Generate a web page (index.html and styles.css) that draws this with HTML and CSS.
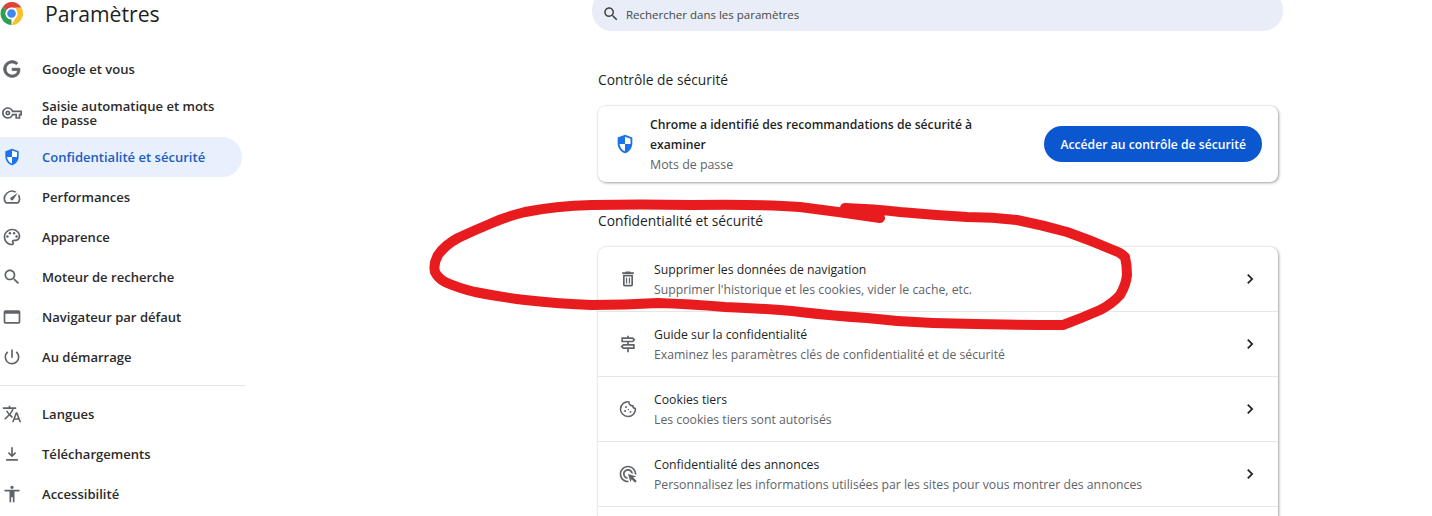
FILE: index.html
```html
<!DOCTYPE html>
<html lang="fr">

<head>
    <meta charset="UTF-8">
    <meta name="viewport" content="width=device-width, initial-scale=1.0">
    <title>Paramètres</title>
    <link rel="stylesheet" href="styles.css">
</head>

<body>
    <div class="page">

        <!-- left menu -->
        <aside class="sidebar">
            <header class="brand">
                <svg class="logo" viewBox="0 0 48 48">
                    <path fill="#db4437" d="M24 0a24 24 0 0 1 20.800 12H24a12 12 0 0 0-11.400 8.200L6.600 8.900A24 24 0 0 1 24 0z" />
                    <path fill="#fbc02d" d="M44.800 12A24 24 0 0 1 24 48l10.400-18A12 12 0 0 0 34.400 18l-2-6z" />
                    <path fill="#2e9e4f" d="M6.600 8.900l6 10.400a12 12 0 0 0 1 10.700 12 12 0 0 0 10.400 6L24 48A24 24 0 0 1 6.600 8.900z" />
                    <circle cx="24" cy="24" r="12.500" fill="#fff" />
                    <circle cx="24" cy="24" r="9" fill="#4285f4" />
                </svg>
                <h1 class="brand-title">Paramètres</h1>
            </header>

            <nav class="menu">
                <a class="menu-item">
                    <svg class="icon icon-bold" viewBox="0 0 24 24"><path d="M21.35 11.1h-9.17v2.73h6.51c-.33 3.81-3.5 5.44-6.5 5.44C8.36 19.27 5 16.25 5 12c0-4.1 3.2-7.27 7.2-7.27 3.09 0 4.9 1.97 4.9 1.97L19 4.72S16.56 2 12.1 2C6.42 2 2 6.8 2 12c0 5.05 4.13 10 10.22 10 5.35 0 9.25-3.67 9.25-9.09 0-1.15-.12-1.81-.12-1.81z" /></svg>
                    <span>Google et vous</span>
                </a>
                <a class="menu-item menu-item-tall">
                    <svg class="icon" viewBox="0 0 24 24"><path d="M22 19h-6v-4h-2.68c-1.14 2.42-3.6 4-6.32 4-3.86 0-7-3.14-7-7s3.14-7 7-7c2.72 0 5.17 1.58 6.32 4H24v6h-2v4zm-4-2h2v-4h2v-2H11.94l-.23-.67C11.01 8.34 9.11 7 7 7c-2.76 0-5 2.24-5 5s2.24 5 5 5c2.11 0 4.01-1.34 4.71-3.33l.23-.67H18v4zM7 15c-1.65 0-3-1.35-3-3s1.35-3 3-3 3 1.35 3 3-1.35 3-3 3zm0-4c-.55 0-1 .45-1 1s.45 1 1 1 1-.45 1-1-.45-1-1-1z" /></svg>
                    <span>Saisie automatique et mots de passe</span>
                </a>
                <a class="menu-item active">
                    <svg class="icon" viewBox="0 0 24 24"><path fill="#1a73e8" d="M12 2 4 5v6.090c0 5.050 3.410 9.760 8 10.910 4.590-1.150 8-5.860 8-10.910V5l-8-3z" /><path fill="#fff" d="M12 4.200 18 6.400V12h-6zM12 12v7.900c-3.200-1-5.500-4.200-5.900-7.900z" /></svg>
                    <span>Confidentialité et sécurité</span>
                </a>
                <a class="menu-item">
                    <svg class="icon" viewBox="0 0 24 24"><path d="M20.38 8.57l-1.23 1.85a8 8 0 0 1-.22 7.58H5.07A8 8 0 0 1 15.58 6.85l1.85-1.23A10 10 0 0 0 3.35 19a2 2 0 0 0 1.72 1h13.85a2 2 0 0 0 1.74-1 10 10 0 0 0-.27-10.44zm-9.79 6.84a2 2 0 0 0 2.83 0l5.66-8.49-8.49 5.66a2 2 0 0 0 0 2.83z" /></svg>
                    <span>Performances</span>
                </a>
                <a class="menu-item">
                    <svg class="icon" viewBox="0 0 24 24"><path d="M12 22C6.49 22 2 17.51 2 12S6.49 2 12 2s10 4.04 10 9c0 3.31-2.69 6-6 6h-1.77c-.28 0-.5.22-.5.5 0 .12.05.23.13.33.41.47.64 1.06.64 1.67 0 1.38-1.12 2.5-2.5 2.5zm0-18c-4.41 0-8 3.59-8 8s3.59 8 8 8c.28 0 .5-.22.5-.5 0-.16-.08-.28-.14-.35-.41-.46-.63-1.05-.63-1.65 0-1.38 1.12-2.5 2.5-2.5H16c2.21 0 4-1.79 4-4 0-3.86-3.59-7-8-7z" /><circle cx="6.500" cy="11.500" r="1.500" /><circle cx="9.500" cy="7.500" r="1.500" /><circle cx="14.500" cy="7.500" r="1.500" /><circle cx="17.500" cy="11.500" r="1.500" /></svg>
                    <span>Apparence</span>
                </a>
                <a class="menu-item">
                    <svg class="icon" viewBox="0 0 24 24"><path d="M15.5 14h-.79l-.28-.27C15.41 12.59 16 11.11 16 9.5 16 5.91 13.09 3 9.5 3S3 5.91 3 9.5 5.91 16 9.5 16c1.61 0 3.09-.59 4.23-1.57l.27.28v.79l5 4.99L20.49 19l-4.99-5zm-6 0C7.01 14 5 11.99 5 9.5S7.01 5 9.5 5 14 7.01 14 9.5 11.99 14 9.5 14z" /></svg>
                    <span>Moteur de recherche</span>
                </a>
                <a class="menu-item">
                    <svg class="icon" viewBox="0 0 24 24"><path d="M20 4H4c-1.11 0-2 .9-2 2v12c0 1.1.89 2 2 2h16c1.1 0 2-.9 2-2V6c0-1.1-.89-2-2-2zm0 14H4V8h16v10z" /></svg>
                    <span>Navigateur par défaut</span>
                </a>
                <a class="menu-item">
                    <svg class="icon" viewBox="0 0 24 24"><path d="M13 3h-2v10h2V3zm4.83 2.17-1.42 1.42A6.92 6.92 0 0 1 19 12c0 3.87-3.13 7-7 7A6.995 6.995 0 0 1 7.58 6.58L6.17 5.17A8.932 8.932 0 0 0 3 12a9 9 0 0 0 18 0c0-2.74-1.23-5.18-3.17-6.83z" /></svg>
                    <span>Au démarrage</span>
                </a>
                <div class="menu-divider"></div>
                <a class="menu-item">
                    <svg class="icon" viewBox="0 0 24 24"><path d="M12.87 15.07l-2.54-2.51.03-.03c1.74-1.94 2.98-4.17 3.71-6.53H17V4h-7V2H8v2H1v1.99h11.17C11.5 7.92 10.44 9.75 9 11.35 8.07 10.32 7.3 9.19 6.69 8h-2c.73 1.63 1.73 3.17 2.98 4.56l-5.09 5.02L4 19l5-5 3.11 3.11.76-2.04zM18.5 10h-2L12 22h2l1.12-3h4.75L21 22h2l-4.5-12zm-2.62 7l1.62-4.33L19.12 17h-3.24z" /></svg>
                    <span>Langues</span>
                </a>
                <a class="menu-item">
                    <svg class="icon" viewBox="0 0 24 24"><path d="M12 16l-5-5 1.41-1.41L11 12.17V4h2v8.17l2.59-2.58L17 11l-5 5zM5 20v-2h14v2H5z" /></svg>
                    <span>Téléchargements</span>
                </a>
                <a class="menu-item">
                    <svg class="icon" viewBox="0 0 24 24"><path d="M12 2c1.1 0 2 .9 2 2s-.9 2-2 2-2-.9-2-2 .9-2 2-2zm9 7h-6v13h-2v-6h-2v6H9V9H3V7h18v2z" /></svg>
                    <span>Accessibilité</span>
                </a>
            </nav>
        </aside>

        <!-- main column -->
        <main class="content">
            <div class="search">
                <svg class="search-icon" viewBox="0 0 24 24"><path d="M15.5 14h-.79l-.28-.27C15.41 12.59 16 11.11 16 9.5 16 5.91 13.09 3 9.5 3S3 5.91 3 9.5 5.91 16 9.5 16c1.61 0 3.09-.59 4.23-1.57l.27.28v.79l5 4.99L20.49 19l-4.99-5zm-6 0C7.01 14 5 11.99 5 9.5S7.01 5 9.5 5 14 7.01 14 9.5 11.99 14 9.5 14z" /></svg>
                <span>Rechercher dans les paramètres</span>
            </div>

            <section class="section">
                <h2 class="section-title">Contrôle de sécurité</h2>
                <div class="card check-card">
                    <svg class="check-icon" viewBox="0 0 24 24"><path fill="#1a73e8" d="M12 2 4 5v6.090c0 5.050 3.410 9.760 8 10.910 4.590-1.150 8-5.860 8-10.910V5l-8-3z" /><path fill="#fff" d="M12 4.200 18 6.400V12h-6zM12 12v7.900c-3.200-1-5.500-4.200-5.900-7.900z" /></svg>
                    <div class="check-text">
                        <div class="check-title">Chrome a identifié des recommandations de sécurité à examiner</div>
                        <div class="row-sub">Mots de passe</div>
                    </div>
                    <button class="check-btn">Accéder au contrôle de sécurité</button>
                </div>
            </section>

            <section class="section section-privacy">
                <h2 class="section-title">Confidentialité et sécurité</h2>
                <div class="card">
                    <div class="row">
                        <svg class="row-icon" viewBox="0 0 24 24"><path d="M6 19c0 1.1.9 2 2 2h8c1.1 0 2-.9 2-2V7H6v12zM8 9h8v10H8V9zm7.5-5l-1-1h-5l-1 1H5v2h14V4h-3.5zM9.500 10.500h1.500v7H9.500zm3.500 0h1.500v7H13z" /></svg>
                        <div class="row-text">
                            <div class="row-title">Supprimer les données de navigation</div>
                            <div class="row-sub">Supprimer l'historique et les cookies, vider le cache, etc.</div>
                        </div>
                        <svg class="chevron" viewBox="0 0 24 24"><path d="M8.59 16.59 13.17 12 8.59 7.41 10 6l6 6-6 6z" /></svg>
                    </div>
                    <div class="row">
                        <svg class="row-icon" viewBox="0 0 24 24"><path d="M13 10h5l3-3-3-3h-5V2h-2v2H4v6h7v2H6l-3 3 3 3h5v4h2v-4h7v-6h-7v-2zM6 6h11.170l1 1-1 1H6V6zm12 10H6.830l-1-1 1-1H18v2z" /></svg>
                        <div class="row-text">
                            <div class="row-title">Guide sur la confidentialité</div>
                            <div class="row-sub">Examinez les paramètres clés de confidentialité et de sécurité</div>
                        </div>
                        <svg class="chevron" viewBox="0 0 24 24"><path d="M8.59 16.59 13.17 12 8.59 7.41 10 6l6 6-6 6z" /></svg>
                    </div>
                    <div class="row">
                        <svg class="row-icon" viewBox="0 0 24 24"><path fill="none" stroke="#5f6368" stroke-width="1.800" d="M20.900 11.500c-1.800-.2-3.200-1.500-3.100-3.300-2.500.2-4.600-1.700-4.700-4.700C7.800 2.700 3 6.800 3 12c0 5 4 9 9 9 5.300 0 9.300-4.300 8.900-9.500z" /><circle cx="9.500" cy="9.500" r="1.200" /><circle cx="8.500" cy="14.500" r="1.200" /><circle cx="15" cy="15.500" r="1.100" /><circle cx="12.500" cy="12.500" r=".8" /></svg>
                        <div class="row-text">
                            <div class="row-title">Cookies tiers</div>
                            <div class="row-sub">Les cookies tiers sont autorisés</div>
                        </div>
                        <svg class="chevron" viewBox="0 0 24 24"><path d="M8.59 16.59 13.17 12 8.59 7.41 10 6l6 6-6 6z" /></svg>
                    </div>
                    <div class="row">
                        <svg class="row-icon" viewBox="0 0 24 24"><path d="M11.710 17.990A5.993 5.993 0 0 1 6 12c0-3.310 2.690-6 6-6 3.220 0 5.840 2.530 5.990 5.710l-2.100-.63A3.999 3.999 0 0 0 12 8c-2.210 0-4 1.790-4 4 0 1.900 1.330 3.490 3.110 3.890l.6 2.100zM22 12c0 .3-.01.6-.04.9l-1.970-.59c.01-.1.01-.21.01-.31 0-4.420-3.580-8-8-8s-8 3.580-8 8 3.580 8 8 8c.1 0 .21 0 .31-.01l.59 1.970c-.3.03-.6.04-.9.04-5.520 0-10-4.480-10-10S6.480 2 12 2s10 4.480 10 10zm-3.770 4.260L22 15l-10-3 3 10 1.260-3.770 4.270 4.270 1.980-1.980-4.280-4.260z" /></svg>
                        <div class="row-text">
                            <div class="row-title">Confidentialité des annonces</div>
                            <div class="row-sub">Personnalisez les informations utilisées par les sites pour vous montrer des annonces</div>
                        </div>
                        <svg class="chevron" viewBox="0 0 24 24"><path d="M8.59 16.59 13.17 12 8.59 7.41 10 6l6 6-6 6z" /></svg>
                    </div>
                    <div class="row"></div>
                </div>
            </section>
        </main>
    </div>

    <!-- red marker drawn over the screenshot -->
    <svg class="marker" viewBox="0 0 1432 516">
        <path d="M880 218 Q840 212 800 207 Q760 204 692 205 Q640 204 592 205 Q555 206 525 212 Q505 217 492 223 Q475 230 458 238 Q445 245 438 255 Q433 264 435 272 Q438 278 445 282 Q458 288 475 292 Q500 297 525 300 Q560 304 592 305 Q625 305 658 303 Q690 304 725 307 Q775 309 800 312 Q835 316 867 318 Q900 322 933 323 Q1000 325 1063 325 Q1082 318 1100 310 Q1112 304 1120 295 Q1126 285 1127 275 Q1127 265 1125 257 Q1120 252 1113 250 Q1090 240 1067 232 Q1042 225 1017 220 Q992 217 967 217 Q933 215 900 212 Q875 209 845 208" />
    </svg>
</body>

</html>
```

FILE: styles.css
```css
* {
    box-sizing: border-box;
}

html,
body {
    margin: 0;
    padding: 0;
    height: 516px;
    overflow: hidden;
    background-color: #fff;
}

body {
    font-family: 'Open Sans', 'Noto Sans', sans-serif;
    color: #1f1f1f;
}

.page {
    display: grid;
    grid-template-columns: 245px 1fr;
    height: 516px;
    overflow: hidden;
}

/* left menu */
.brand {
    display: flex;
    align-items: center;
    gap: 22px;
    height: 49px;
    padding-bottom: 22px;
}

.logo {
    width: 23px;
    height: 23px;
    flex: none;
}

.brand-title {
    margin: 0;
    font-size: 21.200px;
    font-weight: 500;
    color: #1f1f1f;
}

.menu-item {
    display: flex;
    align-items: center;
    gap: 20px;
    height: 40px;
    padding-left: 2px;
    padding-right: 20px;
    width: 242px;
    font-size: 13.050px;
    font-weight: 600;
    line-height: 14px;
    color: #2b2b2b;
    border-radius: 0 20px 20px 0;
}

.menu-item-tall {
    height: 48px;
}

.menu-item.active {
    background-color: #e8f0fe;
    color: #1a5fbf;
}

.icon {
    width: 20px;
    height: 20px;
    flex: none;
    fill: #5f6368;
}

.icon-bold {
    stroke: #5f6368;
    stroke-width: 1;
}

.menu-divider {
    height: 1px;
    margin: 8px 0;
    background-color: #e6e6e6;
}

/* main column */
.content {
    padding-left: 347px;
    width: 1038px;
}

.search {
    display: flex;
    align-items: center;
    gap: 6px;
    width: 691px;
    height: 41px;
    margin-top: -10px;
    padding: 7px 0 0 10px;
    border-radius: 20px;
    background-color: #e9edf7;
    font-size: 11.500px;
    color: #444746;
}

.search-icon {
    width: 18px;
    height: 18px;
    flex: none;
    fill: #444746;
}

.section {
    margin-left: 6px;
    width: 680px;
}

.section-title {
    margin: 0;
    height: 36px;
    padding-top: 39px;
    box-sizing: content-box;
    font-size: 13.800px;
    line-height: 20px;
    font-weight: 400;
    color: #1f1f1f;
}

.section-privacy .section-title {
    padding-top: 29px;
}

.card {
    background-color: #fff;
    border-radius: 8px;
    box-shadow: 1px 1px 3px rgba(0, 0, 0, 0.35), 0 0 2px rgba(60, 64, 67, 0.15);
}

.check-card {
    display: flex;
    align-items: center;
    height: 76px;
    padding: 0 16px;
}

.check-icon {
    width: 22px;
    height: 22px;
    flex: none;
}

.check-text {
    flex: 1;
    margin-left: 14px;
    padding: 2px 60px 0 0;
    font-size: 12.400px;
    line-height: 20px;
}

.check-title {
    font-weight: 600;
    font-size: 12.200px;
}

.check-btn {
    flex: none;
    height: 36px;
    padding: 0 16px;
    border: none;
    border-radius: 18px;
    background-color: #0b57d0;
    color: #fff;
    font-family: inherit;
    font-size: 12.200px;
    font-weight: 600;
}

.row {
    display: flex;
    align-items: center;
    height: 65px;
    padding: 0 18px 0 20px;
    border-bottom: 1px solid #e6e6e6;
}

.row-icon {
    width: 20px;
    height: 20px;
    flex: none;
    fill: #5f6368;
}

.row-text {
    flex: 1;
    margin-left: 16px;
    padding-top: 2px;
    font-size: 12.250px;
    line-height: 20px;
}

.row-sub {
    color: #5f6368;
}

.chevron {
    width: 20px;
    height: 20px;
    flex: none;
    fill: #1f1f1f;
}

/* red marker */
.marker {
    position: absolute;
    top: 0;
    left: 0;
    width: 1432px;
    height: 516px;
    pointer-events: none;
}

.marker path {
    fill: none;
    stroke: #e81c1f;
    stroke-width: 10;
    stroke-linecap: round;
    stroke-linejoin: round;
}
```
